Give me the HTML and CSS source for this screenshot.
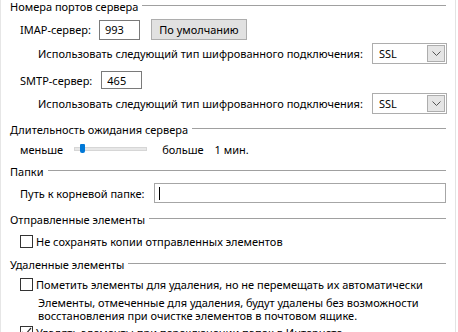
FILE: index.html
```html
<!DOCTYPE html>
<html lang="ru">
<head>
  <meta charset="UTF-8">
  <title>Дополнительно</title>
  <link rel="stylesheet" href="styles.css">
</head>
<body>
<div class="panel">

  <div class="group-title t1"><span>Номера портов сервера</span><i></i></div>
  <div class="row imap">
    <label class="lbl">IMAP-сервер:</label>
    <input class="port" type="text" value="993">
    <button class="btn">По умолчанию</button>
  </div>
  <div class="row enc enc1">
    <span class="enc-text">Использовать следующий тип шифрованного подключения:</span>
    <div class="select"><span>SSL</span><b><svg width="9" height="6" viewBox="0 0 9 6"><path d="M0.5 0.5 L4.5 4.5 L8.5 0.5" fill="none" stroke="#555" stroke-width="1"/></svg></b></div>
  </div>
  <div class="row smtp">
    <label class="lbl">SMTP-сервер:</label>
    <input class="port" type="text" value="465">
  </div>
  <div class="row enc enc2">
    <span class="enc-text">Использовать следующий тип шифрованного подключения:</span>
    <div class="select"><span>SSL</span><b><svg width="9" height="6" viewBox="0 0 9 6"><path d="M0.5 0.5 L4.5 4.5 L8.5 0.5" fill="none" stroke="#555" stroke-width="1"/></svg></b></div>
  </div>

  <div class="group-title t2"><span>Длительность ожидания сервера</span><i></i></div>
  <div class="row timeout">
    <span>меньше</span>
    <div class="slider"><div class="track"></div><div class="thumb"></div></div>
    <span>больше</span>
    <span class="mins">1 мин.</span>
  </div>

  <div class="group-title t3"><span>Папки</span><i></i></div>
  <div class="row folder">
    <label class="lbl">Путь к корневой папке:</label>
    <div class="path"><span class="caret"></span></div>
  </div>

  <div class="group-title t4"><span>Отправленные элементы</span><i></i></div>
  <div class="row check c1">
    <span class="box"></span>
    <span>Не сохранять копии отправленных элементов</span>
  </div>

  <div class="group-title t5"><span>Удаленные элементы</span><i></i></div>
  <div class="row check c2">
    <span class="box"></span>
    <span>Пометить элементы для удаления, но не перемещать их автоматически</span>
  </div>
  <p class="note">Элементы, отмеченные для удаления, будут удалены без возможности<br>восстановления при очистке элементов в почтовом ящике.</p>
  <div class="row check c3">
    <span class="box"><svg width="11" height="10" viewBox="0 0 11 10"><path d="M1 5 L4 8 L10 1" fill="none" stroke="#333" stroke-width="1.2"/></svg></span>
    <span>Удалять элементы при переключении папок в Интернете</span>
  </div>

</div>
</body>
</html>
```

FILE: styles.css
```css
body {
  margin: 0;
  background: #fff;
  font-family: 'Noto Sans', 'Open Sans', sans-serif;
  font-size: 11px;
  color: #000;
  overflow: hidden;
  white-space: nowrap;
}

.panel {
  width: 456px;
  height: 332px;
  border-left: 1px solid #e6e6e6;
  border-right: 1px solid #e3e3e3;
  padding-left: 9px;
  box-sizing: border-box;
}

/* group headers with rule */
.group-title {
  display: flex;
  align-items: center;
  height: 12px;
  padding-right: 9px;
}
.group-title i {
  flex: 1;
  border-top: 1px solid #a0a0a0;
  margin-left: 4px;
  margin-top: -1px;
}
.t2 { margin-top: 9px; }
.t3 { margin-top: 6px; }
.t4 { margin-top: 10px; }
.t5 { margin-top: 10px; }

.row {
  display: flex;
  align-items: center;
}

.lbl {
  margin-left: 10px;
}

.port {
  font: inherit;
  width: 41px;
  height: 20px;
  box-sizing: border-box;
  border: 1px solid #7a7a7a;
  padding: 0 0 0 5px;
  margin: 0;
  outline: none;
}

.imap {
  margin-top: 7px;
  height: 21px;
}
.imap .port { margin-left: 8px; }

.btn {
  font: inherit;
  margin-left: 11px;
  height: 21px;
  width: 96px;
  background: #e1e1e1;
  border: 1px solid #adadad;
  padding: 0;
  color: #000;
}

.enc {
  height: 21px;
  margin-left: 28px;
}
.enc1 { margin-top: 3px; }
.enc2 { margin-top: 3px; }
.enc-text {
  width: 334px;
}

.select {
  display: flex;
  align-items: center;
  width: 75px;
  height: 21px;
  box-sizing: border-box;
  border: 1px solid #adadad;
  padding-left: 6px;
}
.select span { flex: 1; }
.select b {
  width: 16px;
  height: 15px;
  background: #e5e5e5;
  border: 1px solid #adadad;
  margin-right: 1px;
  display: flex;
  align-items: center;
  justify-content: center;
}

.smtp {
  margin-top: 6px;
  height: 20px;
}
.smtp .port { margin-left: 9px; height: 18px; }

.timeout {
  margin-top: 4px;
  margin-left: 10px;
  height: 20px;
}
.slider {
  position: relative;
  width: 73px;
  height: 14px;
  margin-left: 11px;
  margin-right: 15px;
}
.track {
  position: absolute;
  left: 0;
  right: 0;
  top: 5px;
  height: 2px;
  background: #e7e7e7;
  border: 1px solid #d6d6d6;
}
.thumb {
  position: absolute;
  left: 6px;
  top: 2px;
  width: 5px;
  height: 9px;
  background: #0078d7;
  border-radius: 1px 1px 2px 2px;
}
.mins { margin-left: 11px; }

.folder {
  margin-top: 6px;
  height: 20px;
}
.path {
  margin-left: auto;
  margin-right: 9px;
  width: 292px;
  height: 20px;
  box-sizing: border-box;
  border: 1px solid #a6a6a6;
  display: flex;
  align-items: center;
}
.caret {
  width: 1px;
  height: 13px;
  background: #000;
  margin-left: 4px;
}

.check {
  margin-left: 10px;
  height: 14px;
}
.c1 { margin-top: 9px; }
.c2 { margin-top: 7px; }
.c3 { margin-top: 3px; }
.box {
  width: 13px;
  height: 13px;
  box-sizing: border-box;
  border: 1px solid #333;
  margin-right: 3px;
  display: flex;
  align-items: center;
  justify-content: center;
}

.note {
  margin: 5px 0 0 28px;
  line-height: 13px;
}
```
